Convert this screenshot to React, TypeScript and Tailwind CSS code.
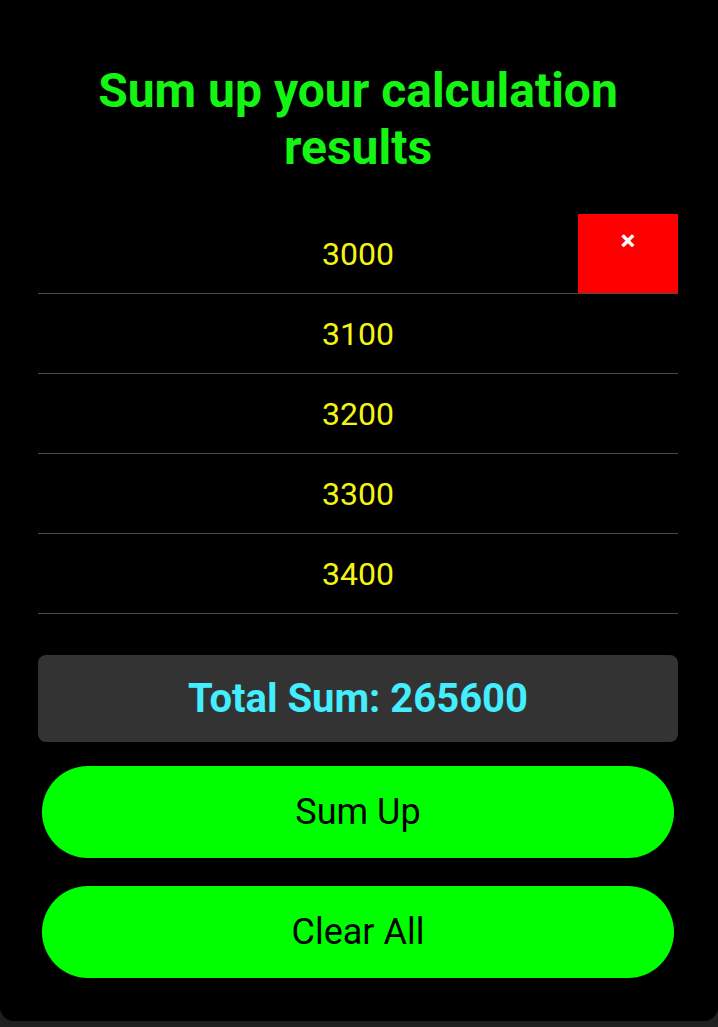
import { useState } from "react";

const font = { fontFamily: "Roboto, 'Liberation Sans', sans-serif" };

export default function App() {
  const [results, setResults] = useState<number[]>([3000, 3100, 3200, 3300, 3400]);

  return (
    <div className="min-h-screen bg-[#1f1f1f]" style={font}>
      <div className="bg-black rounded-b-[14px] pl-[38px] pr-[40px] pt-[62px] pb-[43px]">
        <h1 className="text-center font-bold text-[48px] leading-[57px] text-[#14f514]">
          Sum up your calculation results
        </h1>

        <ul className="mt-[38px]">
          {results.map((r, i) => (
            <li
              key={r}
              className="relative h-[80px] flex items-center justify-center border-b border-[#4a4a4a] text-[32px] text-[#f5f515]"
            >
              {r}
              {i === 0 && (
                <button
                  onClick={() => setResults(results.filter((x) => x !== r))}
                  className="absolute right-0 top-0 w-[100px] h-[79px] bg-[#ff0000] text-white font-bold text-[28px] leading-none flex justify-center pt-[13px]"
                >
                  ×
                </button>
              )}
            </li>
          ))}
        </ul>

        <div className="mt-[41px] h-[87px] rounded-lg bg-[#333] flex items-center justify-center font-bold text-[40px] text-[#44eeff]">
          Total Sum: 265600
        </div>

        <div className="mt-[24px] px-[4px] flex flex-col gap-[28px]">
          <button className="h-[92px] rounded-full bg-[#00ff00] text-black text-[36px]">
            Sum Up
          </button>
          <button
            onClick={() => setResults([])}
            className="h-[92px] rounded-full bg-[#00ff00] text-black text-[36px]"
          >
            Clear All
          </button>
        </div>
      </div>
    </div>
  );
}
